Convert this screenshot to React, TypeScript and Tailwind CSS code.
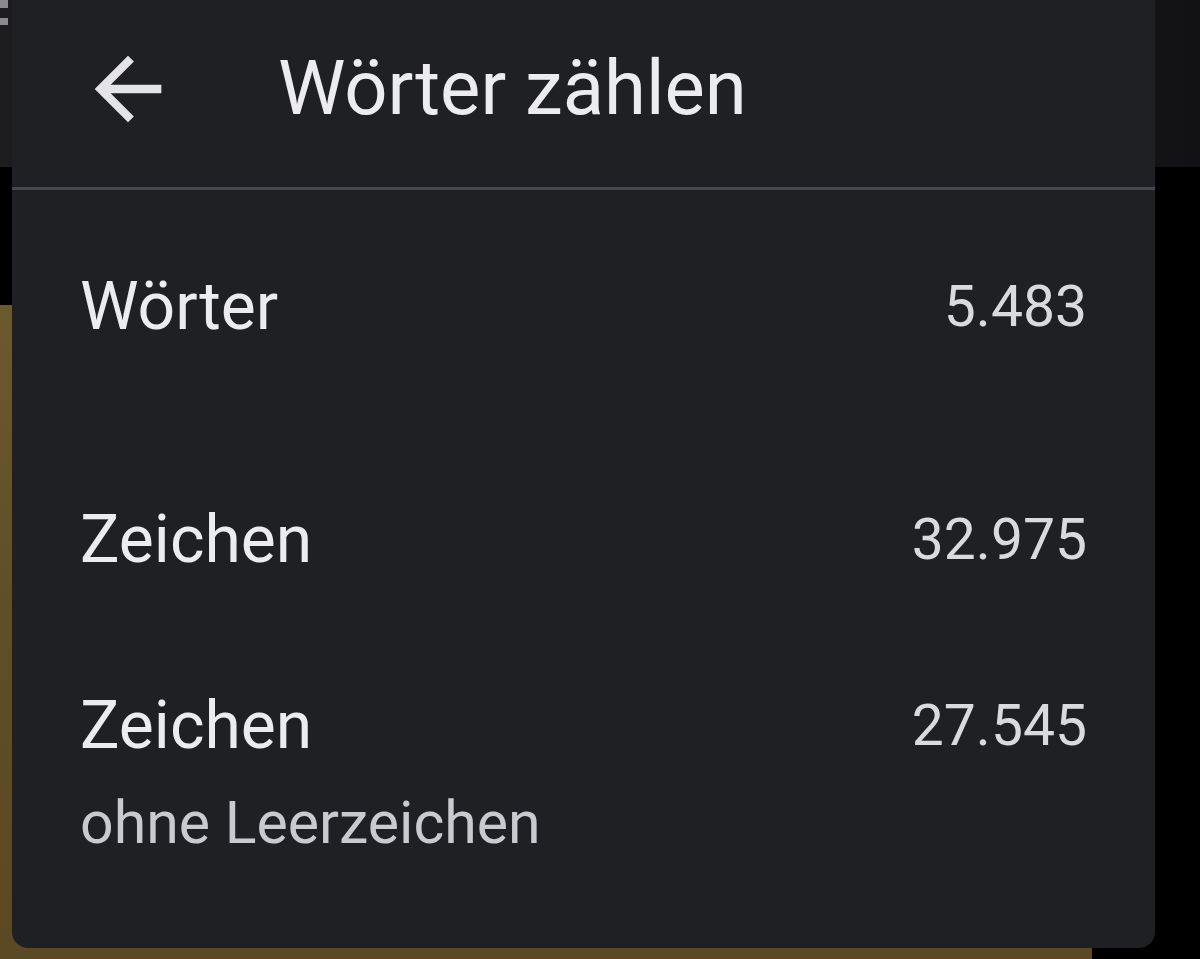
import React from 'react';

const font = { fontFamily: 'Roboto, "Noto Sans", sans-serif' };

function BackArrow() {
  return (
    <svg viewBox="0 0 24 24" className="w-[100px] h-[100px]" fill="#e3e3e8">
      <path d="M20 11H7.83l5.59-5.59L12 4l-8 8 8 8 1.41-1.41L7.83 13H20v-2z" />
    </svg>
  );
}

interface StatRowProps {
  label: string;
  value: string;
  sub?: string;
  className?: string;
}

function StatRow({ label, value, sub, className }: StatRowProps) {
  return (
    <div className={`flex justify-between items-start ${className ?? ''}`}>
      <div className="flex flex-col">
        <span className="text-[66px] leading-[66px] text-[#ececf0]">{label}</span>
        {sub && <span className="text-[59px] leading-[59px] mt-[34px] text-[#c9cacf]">{sub}</span>}
      </div>
      <span className="text-[57px] leading-[66px] text-[#d9dade]">{value}</span>
    </div>
  );
}

export default function App() {
  return (
    <div className="relative w-full h-[959px] bg-black overflow-hidden" style={font}>
      {/* page underneath the dialog */}
      <div className="flex flex-col h-full">
        <div className="h-[167px] bg-gradient-to-r from-[#1d1d20] to-[#121214] relative">
          <div className="absolute left-0 top-0 w-[8px] h-[8px] bg-[#8a8a8e]" />
          <div className="absolute left-0 top-[18px] w-[8px] h-[7px] bg-[#8a8a8e]" />
        </div>
        <div className="h-[138px] bg-black" />
        <div className="flex-1 w-[1092px] bg-gradient-to-b from-[#6b5a2e] via-[#5e4e26] to-[#5a4922]" />
      </div>

      {/* dialog */}
      <div className="absolute left-[12px] top-0 w-[1143px] h-[948px] bg-[#1f2024] rounded-b-[16px] flex flex-col">
        <div className="h-[187px] flex items-center shrink-0">
          <div className="ml-[66px] mt-[-10px]">
            <BackArrow />
          </div>
          <h1 className="ml-[100px] mt-[-12px] text-[76px] leading-none text-[#ececf0]">Wörter zählen</h1>
        </div>
        <div className="h-[3px] bg-[#46474e] shrink-0" />
        <div className="px-[68px] flex flex-col">
          <StatRow label="Wörter" value="5.483" className="mt-[84px]" />
          <StatRow label="Zeichen" value="32.975" className="mt-[167px]" />
          <StatRow label="Zeichen" value="27.545" sub="ohne Leerzeichen" className="mt-[120px]" />
        </div>
      </div>
    </div>
  );
}
